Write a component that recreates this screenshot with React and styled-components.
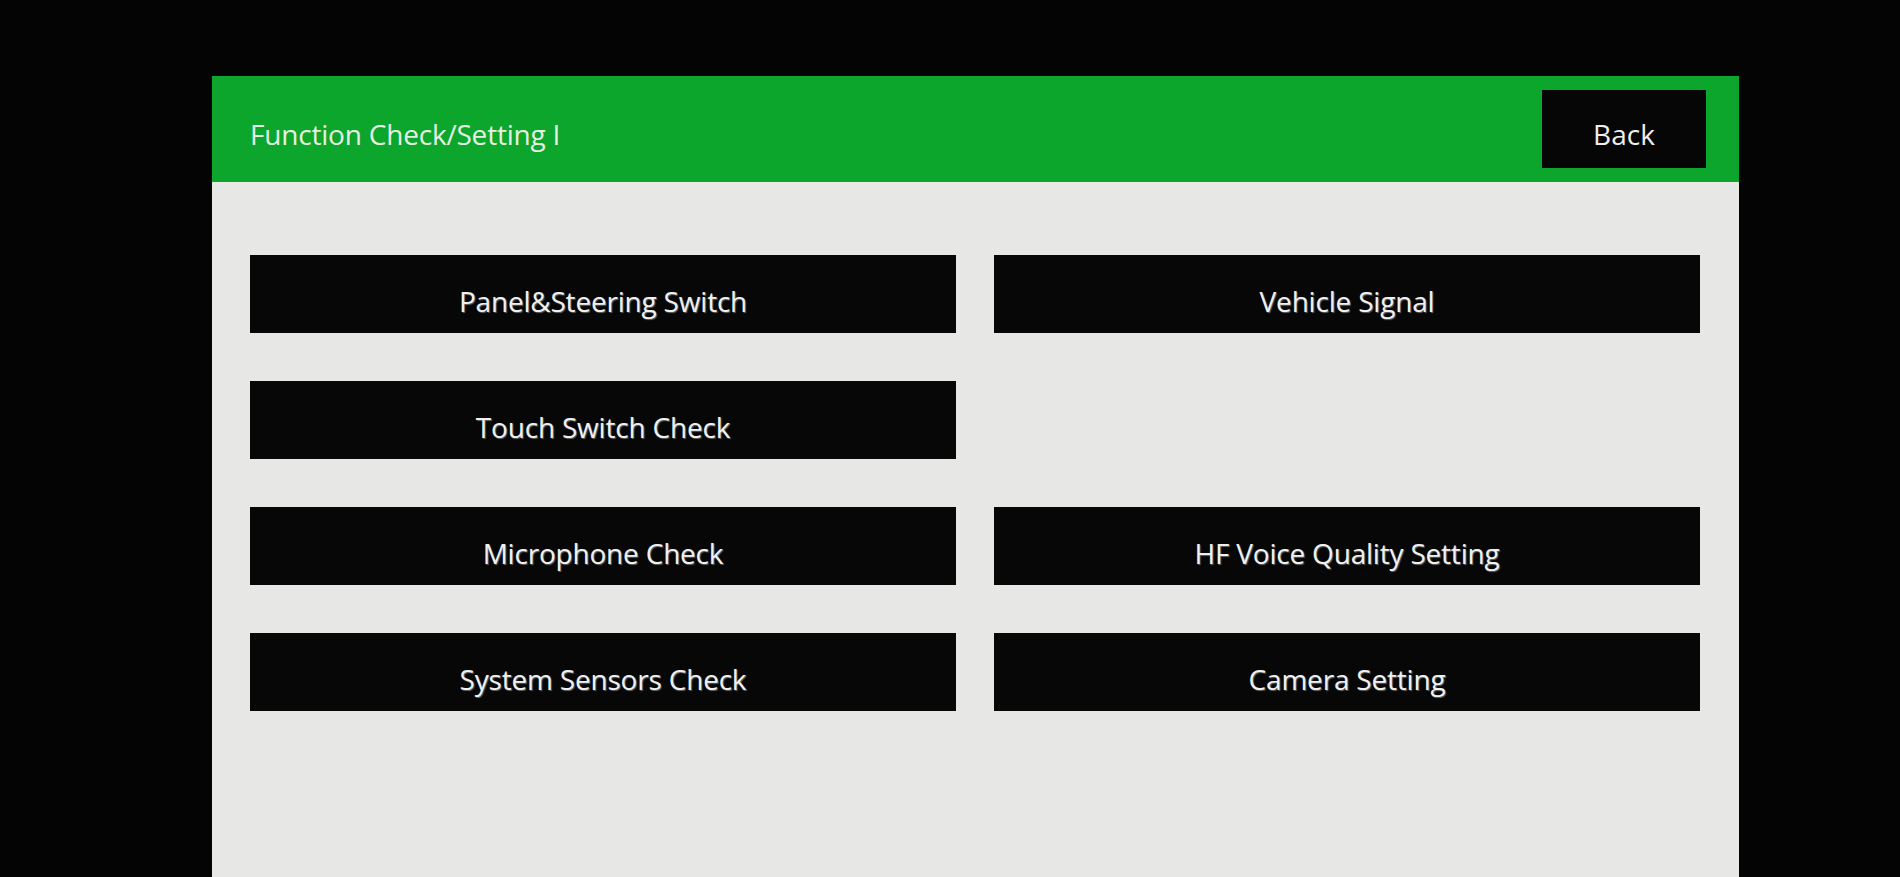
import React from "react";
import styled, { createGlobalStyle } from "styled-components";

const GlobalStyle = createGlobalStyle`
  html, body {
    margin: 0;
    padding: 0;
    background: #040404;
  }
  body {
    font-family: "Open Sans", "Noto Sans", "Liberation Sans", sans-serif;
  }
`;

const Screen = styled.div`
  height: 877px;
  padding: 76px 0 0 212px;
  box-sizing: border-box;
  overflow: hidden;
  background: #040404;
`;

const Panel = styled.div`
  width: 1527px;
  height: 801px;
  display: flex;
  flex-direction: column;
  background: #e7e8e5;
`;

const Header = styled.header`
  height: 106px;
  display: flex;
  align-items: center;
  justify-content: space-between;
  padding: 0 33px 0 38px;
  background: #0ba62b;
`;

const Title = styled.h1`
  margin: 0;
  padding-top: 9px;
  font-size: 28px;
  font-weight: 500;
  letter-spacing: -0.2px;
  color: #e6efe2;
`;

const BackButton = styled.button`
  width: 164px;
  height: 78px;
  border: none;
  padding-top: 10px;
  background: #060606;
  color: #eeeeee;
  font-family: inherit;
  font-size: 28px;
  font-weight: 500;
  cursor: pointer;
`;

const Menu = styled.div`
  display: grid;
  grid-template-columns: 706px 706px;
  grid-auto-rows: 78px;
  column-gap: 38px;
  row-gap: 48px;
  padding: 73px 38px 0 38px;
`;

const MenuButton = styled.button`
  border: none;
  background: #070707;
  color: #f0f0f0;
  font-family: inherit;
  font-size: 28px;
  font-weight: 500;
  letter-spacing: -0.2px;
  padding-top: 14px;
  text-shadow: 1px 1px 1px rgba(160, 160, 160, 0.6);
  cursor: pointer;
`;

const Blank = styled.div``;

const items = [
  "Panel&Steering Switch",
  "Vehicle Signal",
  "Touch Switch Check",
  null,
  "Microphone Check",
  "HF Voice Quality Setting",
  "System Sensors Check",
  "Camera Setting",
];

export default function App() {
  return (
    <>
      <GlobalStyle />
      <Screen>
        <Panel>
          <Header>
            <Title>Function Check/Setting I</Title>
            <BackButton>Back</BackButton>
          </Header>
          <Menu>
            {items.map((label, i) =>
              label ? <MenuButton key={i}>{label}</MenuButton> : <Blank key={i} />
            )}
          </Menu>
        </Panel>
      </Screen>
    </>
  );
}
